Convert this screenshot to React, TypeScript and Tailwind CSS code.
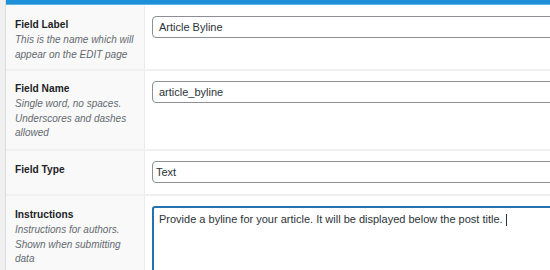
import React from 'react'

const fontStack = { fontFamily: '"Liberation Sans", Arial, sans-serif' }

type RowProps = {
    label: string
    desc?: string[]
    padTop: string
    rowH: string
    children: React.ReactNode
}

const Row = ({ label, desc, padTop, rowH, children }: RowProps) => (
    <div className={`flex shrink-0 border-b-2 border-[#f0f0f1] ${rowH}`}>
        <div className={`w-[139px] shrink-0 bg-[#f9f9f9] border-r border-[#ececec] pl-[9px] pr-[2px] ${padTop}`}>
            <div className='text-[10.2px] leading-[14px] font-bold text-[#1d2327]'>{label}</div>
            {desc && (
                <div className='text-[10px] leading-[14.5px] italic text-[#646970] mt-[1px]'>
                    {desc.map((line, i) => <div key={i}>{line}</div>)}
                </div>
            )}
        </div>
        <div className='flex-1 pl-[7px] pt-[10px] overflow-hidden'>
            {children}
        </div>
    </div>
)

export default function App() {
    return (
        <div className='w-[550px] h-[270px] overflow-hidden flex bg-white' style={fontStack}>
            <div className='w-[6px] shrink-0 bg-[#f0f0f1] border-r border-[#dcdcde]' />
            <div className='flex-1 flex flex-col min-w-0'>
                <div className='h-[5px] shrink-0 bg-[#1e90d8] border-b border-[#5ab4e8]' />

                <Row label='Field Label' desc={['This is the name which will', 'appear on the EDIT page']} padTop='pt-[13px]' rowH='h-[66px]'>
                    <div className='mt-[1px] w-[420px] h-[22px] border border-[#8c8f94] rounded-[4px] pl-[6px] flex items-center text-[11px] text-[#2c3338]'>
                        Article Byline
                    </div>
                </Row>

                <Row label='Field Name' desc={['Single word, no spaces.', 'Underscores and dashes', 'allowed']} padTop='pt-[11px]' rowH='h-[80px]'>
                    <div className='w-[420px] h-[22px] border border-[#8c8f94] rounded-[4px] pl-[6px] flex items-center text-[11px] text-[#2c3338]'>
                        article_byline
                    </div>
                </Row>

                <Row label='Field Type' padTop='pt-[12px]' rowH='h-[45px]'>
                    <div className='w-[420px] h-[22px] border border-[#8c8f94] rounded-[4px] pl-[3px] flex items-center text-[11px] text-[#2c3338]'>
                        Text
                    </div>
                </Row>

                <Row label='Instructions' desc={['Instructions for authors.', 'Shown when submitting', 'data']} padTop='pt-[12px]' rowH='h-[90px]'>
                    <div className='w-[420px] h-[90px] border-2 border-[#2271b1] rounded-[3px] pl-[5px] pt-[3px] text-[11px] leading-[16px] text-[#2c3338] whitespace-nowrap'>
                        Provide a byline for your article. It will be displayed below the post title.
                        <span className='inline-block w-px h-[12px] bg-[#2c3338] ml-[3px] align-middle' />
                    </div>
                </Row>
            </div>
        </div>
    )
}
